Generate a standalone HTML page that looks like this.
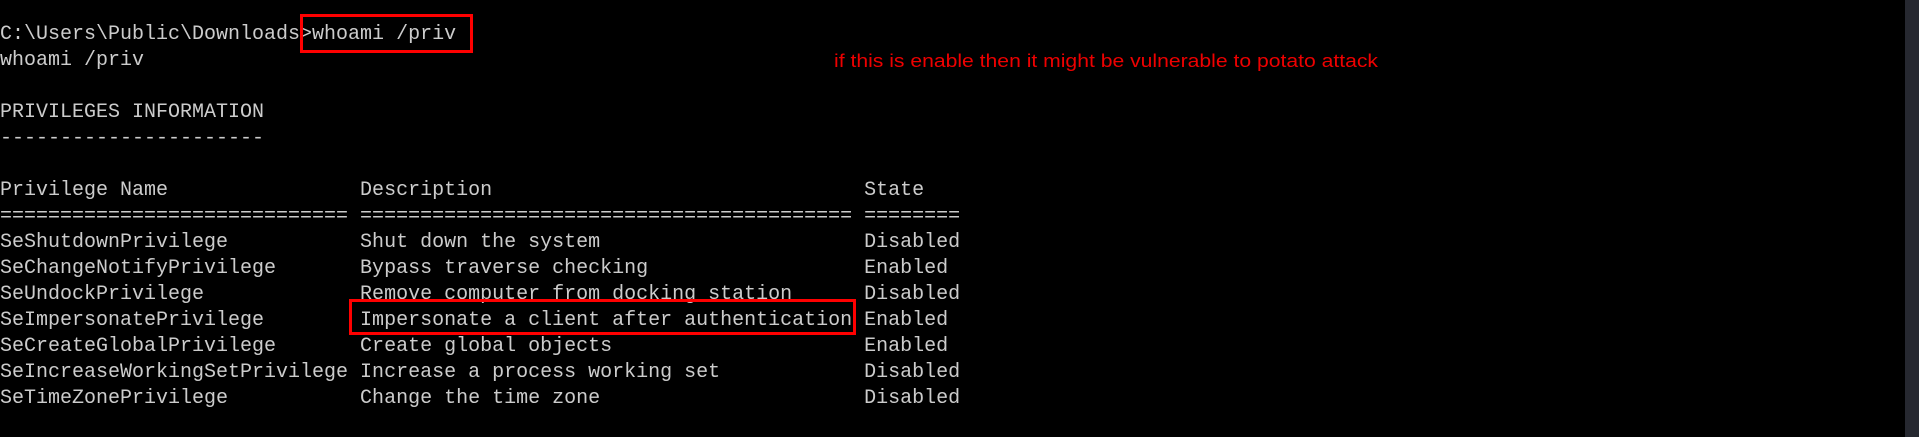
<!DOCTYPE html>
<html><head><meta charset="utf-8"><style>
html,body{margin:0;padding:0;background:#000;width:1919px;height:437px;overflow:hidden;position:relative}
pre{position:absolute;left:0;top:22px;margin:0;font-family:"Liberation Mono",monospace;font-size:20px;line-height:26px;color:#cccccc;white-space:pre}
.box{position:absolute;border:3px solid #ff0000;box-sizing:border-box}
.bar{position:absolute;left:1905px;top:0;width:14px;height:437px;background:#262830}
svg{position:absolute;left:0;top:0}
</style></head><body>
<pre>C:\Users\Public\Downloads&gt;whoami /priv
whoami /priv

PRIVILEGES INFORMATION
----------------------

Privilege Name                Description                               State
============================= ========================================= ========
SeShutdownPrivilege           Shut down the system                      Disabled
SeChangeNotifyPrivilege       Bypass traverse checking                  Enabled
SeUndockPrivilege             Remove computer from docking station      Disabled
SeImpersonatePrivilege        Impersonate a client after authentication Enabled
SeCreateGlobalPrivilege       Create global objects                     Enabled
SeIncreaseWorkingSetPrivilege Increase a process working set            Disabled
SeTimeZonePrivilege           Change the time zone                      Disabled</pre>
<div class="box" style="left:300px;top:14px;width:173px;height:39px"></div>
<div class="box" style="left:349px;top:299px;width:507px;height:36px"></div>
<svg width="1919" height="437"><text x="834" y="67" textLength="544" lengthAdjust="spacingAndGlyphs" font-family="Liberation Sans, sans-serif" font-size="18" fill="#ee0000">if this is enable then it might be vulnerable to potato attack</text></svg>
<div class="bar"></div>
</body></html>
